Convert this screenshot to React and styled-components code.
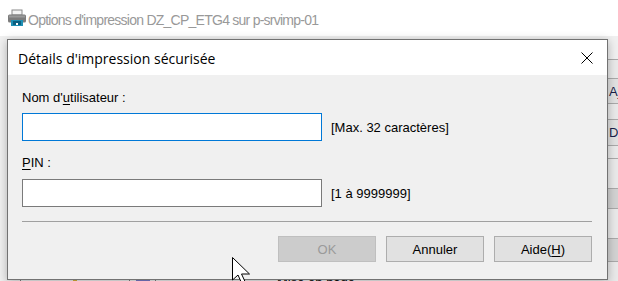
import React from "react";
import styled, { createGlobalStyle } from "styled-components";

const GlobalStyle = createGlobalStyle`
  html, body {
    margin: 0;
    padding: 0;
    background: #f0f0f0;
  }
  body {
    font-family: "Liberation Sans", Arial, sans-serif;
  }
`;

const Screen = styled.div`
  position: relative;
  width: 618px;
  height: 281px;
  overflow: hidden;
  background: #f0f0f0;
`;

const ParentHeader = styled.header`
  height: 36px;
  background: #ffffff;
  display: flex;
  align-items: center;
  padding-left: 7px;
  gap: 1px;
`;

const ParentTitle = styled.span`
  font-family: "Liberation Sans", Arial, sans-serif;
  font-size: 14px;
  letter-spacing: -0.75px;
  color: #999999;
  margin-top: 3px;
`;

const ParentBody = styled.div`
  height: 245px;
  display: flex;
`;

const ParentMain = styled.div`
  flex: 1;
  display: flex;
  flex-direction: column;
  justify-content: flex-end;
`;

const BottomRow = styled.div`
  height: 6px;
  display: flex;
  align-items: flex-start;
  padding-left: 20px;
`;

const BottomCell = styled.div`
  width: ${(p) => p.$w}px;
  height: 6px;
  border-left: 1px solid #7d7d7d;
  display: flex;
  justify-content: ${(p) => (p.$text ? "flex-start" : "center")};
  padding-left: ${(p) => (p.$text ? 121 : 0)}px;
  padding-top: ${(p) => (p.$text ? 1 : 0)}px;
  font-size: 13px;
  color: #000;
  line-height: 13px;
  white-space: nowrap;
`;

const Chip = styled.div`
  width: ${(p) => p.$w}px;
  height: 6px;
  background: ${(p) => p.$c};
`;

const SideColumn = styled.div`
  width: 12px;
  display: flex;
  flex-direction: column;
`;

const SideCell = styled.div`
  height: ${(p) => p.$h}px;
  background: ${(p) => p.$bg};
  border-top: 1px solid #a9a9a9;
  font-size: 13px;
  color: #1a1f4a;
  padding-left: 3px;
  display: flex;
  align-items: center;
  white-space: nowrap;
  overflow: hidden;
  box-sizing: border-box;

  &:first-child {
    border-top: none;
  }
`;

const Dialog = styled.div`
  position: absolute;
  left: 7px;
  top: 39px;
  width: 601px;
  height: 241px;
  box-sizing: border-box;
  border: 1px solid #727272;
  background: #f0f0f0;
  box-shadow: 0 2px 9px rgba(0, 0, 0, 0.28);
  display: flex;
  flex-direction: column;
`;

const TitleBar = styled.div`
  height: 35px;
  background: #ffffff;
  display: flex;
  align-items: center;
  justify-content: space-between;
  padding: 0 13px 0 10px;
  flex-shrink: 0;
`;

const DialogTitle = styled.span`
  font-family: "Open Sans", "Noto Sans", sans-serif;
  font-size: 14px;
  color: #000;
  margin-top: 1px;
`;

const CloseButton = styled.button`
  width: 14px;
  height: 14px;
  padding: 0;
  border: none;
  background: transparent;
  display: flex;
  align-items: center;
  justify-content: center;
  margin-top: 1px;
`;

const DialogBody = styled.div`
  flex: 1;
  padding: 15px 15px 0 14px;
  display: flex;
  flex-direction: column;
`;

const FieldLabel = styled.label`
  font-size: 13px;
  line-height: 16px;
  color: #000;
  margin-top: ${(p) => p.$mt}px;

  u {
    text-decoration-thickness: 1px;
    text-underline-offset: 2px;
  }
`;

const FieldRow = styled.div`
  display: flex;
  align-items: center;
  gap: 9px;
  margin-top: ${(p) => p.$mt}px;
`;

const TextInput = styled.input`
  width: 300px;
  height: 28px;
  box-sizing: border-box;
  border: 1px solid ${(p) => (p.$focused ? "#0078d7" : "#7a7a7a")};
  background: #ffffff;
  outline: none;
  padding: 0 4px;
  font-family: "Liberation Sans", Arial, sans-serif;
  font-size: 13px;
`;

const Hint = styled.span`
  font-size: 13px;
  color: #000;
`;

const Separator = styled.hr`
  margin: 14px 0 0 0;
  border: none;
  border-top: 1px solid #a0a0a0;
  height: 0;
`;

const ButtonBar = styled.div`
  display: flex;
  justify-content: flex-end;
  gap: 10px;
  margin-top: 14px;
`;

const DialogButton = styled.button`
  width: 98px;
  height: 26px;
  box-sizing: border-box;
  border: 1px solid ${(p) => (p.disabled ? "#bfbfbf" : "#adadad")};
  background: ${(p) => (p.disabled ? "#cccccc" : "#e1e1e1")};
  color: ${(p) => (p.disabled ? "#9a9a9a" : "#000")};
  font-family: "Liberation Sans", Arial, sans-serif;
  font-size: 13px;
  padding: 0;

  u {
    text-decoration-thickness: 1px;
    text-underline-offset: 2px;
  }
`;

const Cursor = styled.svg`
  position: absolute;
  left: 232px;
  top: 257px;
`;

function PrinterIcon() {
  return (
    <svg width="20" height="18" viewBox="0 0 20 18">
      <rect x="5" y="1" width="10" height="5" fill="#f4f4f4" stroke="#8a8a8a" />
      <rect x="1" y="5.5" width="18" height="8" rx="1.5" fill="#7c7c7c" />
      <rect x="2" y="6.5" width="16" height="2" fill="#9a9a9a" />
      <rect x="4" y="11" width="12" height="6" fill="#1e8fb4" />
      <rect x="6" y="12" width="8" height="4" fill="#0c5f80" />
      <rect x="9" y="14" width="2" height="2" fill="#ffffff" />
    </svg>
  );
}

const sideCells = [
  { h: 23, bg: "#f0f0f0" },
  { h: 19, bg: "#e9e9e9" },
  { h: 25, bg: "#e1e1e1", label: "Ajouter" },
  { h: 16, bg: "#e9e9e9" },
  { h: 26, bg: "#e1e1e1", label: "Détails" },
  { h: 13, bg: "#e9e9e9" },
  { h: 30, bg: "#e9e9e9" },
  { h: 20, bg: "#d2d2d2" },
  { h: 30, bg: "#e9e9e9" },
  { h: 23, bg: "#d2d2d2" },
  { h: 20, bg: "#e9e9e9" },
];

export default function App() {
  return (
    <>
      <GlobalStyle />
      <Screen>
        <ParentHeader>
          <PrinterIcon />
          <ParentTitle>Options d'impression DZ_CP_ETG4 sur p-srvimp-01</ParentTitle>
        </ParentHeader>
        <ParentBody>
          <ParentMain>
            <BottomRow>
              <BottomCell $w={108}>
                <Chip $w={4} $c="#d8b13a" />
              </BottomCell>
              <BottomCell $w={25}>
                <Chip $w={14} $c="#7b7bc9" />
              </BottomCell>
              <BottomCell $w={250} $text>
                Mise en page...
              </BottomCell>
            </BottomRow>
          </ParentMain>
          <SideColumn>
            {sideCells.map((c, i) => (
              <SideCell key={i} $h={c.h} $bg={c.bg}>
                {c.label}
              </SideCell>
            ))}
          </SideColumn>
        </ParentBody>

        <Dialog>
          <TitleBar>
            <DialogTitle>Détails d'impression sécurisée</DialogTitle>
            <CloseButton aria-label="Fermer">
              <svg width="12" height="12" viewBox="0 0 12 12">
                <path d="M0.5 0.5 L11.5 11.5 M11.5 0.5 L0.5 11.5" stroke="#000" strokeWidth="1" />
              </svg>
            </CloseButton>
          </TitleBar>
          <DialogBody>
            <FieldLabel $mt={0}>
              Nom d'<u>u</u>tilisateur :
            </FieldLabel>
            <FieldRow $mt={7}>
              <TextInput $focused />
              <Hint>[Max. 32 caractères]</Hint>
            </FieldRow>
            <FieldLabel $mt={14}>
              <u>P</u>IN :
            </FieldLabel>
            <FieldRow $mt={8}>
              <TextInput />
              <Hint>[1 à 9999999]</Hint>
            </FieldRow>
            <Separator />
            <ButtonBar>
              <DialogButton disabled>OK</DialogButton>
              <DialogButton>Annuler</DialogButton>
              <DialogButton>
                Aide(<u>H</u>)
              </DialogButton>
            </ButtonBar>
          </DialogBody>
        </Dialog>

        <Cursor width="19" height="28" viewBox="0 0 19 28">
          <path
            d="M0.5 0.5 L0.5 23 L6 18 L10 27 L13.5 25.5 L9.5 17 L17.5 17 Z"
            fill="#ffffff"
            stroke="#000000"
            strokeWidth="1"
          />
        </Cursor>
      </Screen>
    </>
  );
}
